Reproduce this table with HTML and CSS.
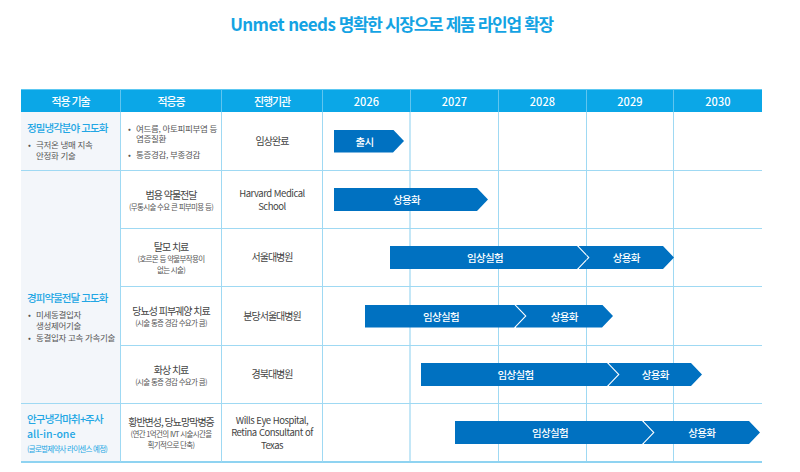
FILE: index.html
```html
<!DOCTYPE html>
<html lang="ko">
<head>
<meta charset="utf-8">
<title>Unmet needs 제품 라인업</title>
<link rel="stylesheet" href="styles.css">
</head>
<body>
<div class="page">
  <h1 class="title"><span class="en">Unmet needs</span> 명확한 시장으로 제품 라인업 확장</h1>

  <div class="table">
    <div class="th">적용 기술</div>
    <div class="th">적응증</div>
    <div class="th">진행기관</div>
    <div class="th-years">
      <div class="th yr">2026</div>
      <div class="th yr">2027</div>
      <div class="th yr">2028</div>
      <div class="th yr">2029</div>
      <div class="th yr">2030</div>
    </div>

    <!-- Row 1 -->
    <div class="tech t1">
      <div class="tech-title">정밀냉각분야 고도화</div>
      <ul class="tech-list">
        <li>극저온 냉매 지속<br>안정화 기술</li>
      </ul>
    </div>
    <div class="cell ind ind-list">
      <ul class="bul">
        <li>여드름, 아토피피부염 등<br>염증질환</li>
        <li>통증경감, 부종경감</li>
      </ul>
    </div>
    <div class="cell org">임상완료</div>
    <div class="tl">
      <div class="yc first"></div><div class="yc"></div><div class="yc"></div><div class="yc"></div><div class="yc last"></div>
      <div class="bar" style="left:11px">
        <div class="seg seg-a single" style="width:70px">출시</div>
      </div>
    </div>

    <!-- Rows 2-5 tech -->
    <div class="tech t2">
      <div class="tech-title">경피약물전달 고도화</div>
      <ul class="tech-list">
        <li>미세동결입자<br>생성제어기술</li>
        <li>동결입자 고속 가속기술</li>
      </ul>
    </div>

    <!-- Row 2 -->
    <div class="cell ind">
      <div class="ind-main">범용 약물전달</div>
      <div class="ind-sub">(무통시술 수요 큰 피부미용 등)</div>
    </div>
    <div class="cell org en-org">Harvard Medical<br>School</div>
    <div class="tl">
      <div class="yc first"></div><div class="yc"></div><div class="yc"></div><div class="yc"></div><div class="yc last"></div>
      <div class="bar" style="left:11px">
        <div class="seg seg-a single" style="width:154px">상용화</div>
      </div>
    </div>

    <!-- Row 3 -->
    <div class="cell ind">
      <div class="ind-main">탈모 치료</div>
      <div class="ind-sub">(호르몬 등 약물부작용이<br>없는 시술)</div>
    </div>
    <div class="cell org">서울대병원</div>
    <div class="tl">
      <div class="yc first"></div><div class="yc"></div><div class="yc"></div><div class="yc"></div><div class="yc last"></div>
      <div class="bar" style="left:67px">
        <div class="seg seg-a" style="width:198px">임상실험</div>
        <div class="seg seg-b" style="width:95.5px">상용화</div>
      </div>
    </div>

    <!-- Row 4 -->
    <div class="cell ind">
      <div class="ind-main">당뇨성 피부궤양 치료</div>
      <div class="ind-sub">(시술 통증 경감 수요가 큼)</div>
    </div>
    <div class="cell org">분당서울대병원</div>
    <div class="tl">
      <div class="yc first"></div><div class="yc"></div><div class="yc"></div><div class="yc"></div><div class="yc last"></div>
      <div class="bar" style="left:42px">
        <div class="seg seg-a" style="width:160px">임상실험</div>
        <div class="seg seg-b" style="width:97.5px">상용화</div>
      </div>
    </div>

    <!-- Row 5 -->
    <div class="cell ind">
      <div class="ind-main">화상 치료</div>
      <div class="ind-sub">(시술 통증 경감 수요가 큼)</div>
    </div>
    <div class="cell org">경북대병원</div>
    <div class="tl">
      <div class="yc first"></div><div class="yc"></div><div class="yc"></div><div class="yc"></div><div class="yc last"></div>
      <div class="bar" style="left:98px">
        <div class="seg seg-a" style="width:197px">임상실험</div>
        <div class="seg seg-b" style="width:93.5px">상용화</div>
      </div>
    </div>

    <!-- Row 6 -->
    <div class="tech t3 lastrow">
      <div class="tech-title tight">안구냉각마취+주사</div>
      <div class="tech-title en">all-in-one</div>
      <div class="tech-note">(글로벌제약사 라이센스 예정)</div>
    </div>
    <div class="cell ind lastrow">
      <div class="ind-main">황반변성, 당뇨망막병증</div>
      <div class="ind-sub">(연간 1억건의 IVT 시술시간을<br>획기적으로 단축)</div>
    </div>
    <div class="cell org en-org lastrow">Wills Eye Hospital,<br>Retina Consultant of<br>Texas</div>
    <div class="tl lastrow">
      <div class="yc first"></div><div class="yc"></div><div class="yc"></div><div class="yc"></div><div class="yc last"></div>
      <div class="bar" style="left:132px">
        <div class="seg seg-a" style="width:198px">임상실험</div>
        <div class="seg seg-b" style="width:116.5px">상용화</div>
      </div>
    </div>
  </div>
</div>
</body>
</html>
```

FILE: styles.css
```css
* { box-sizing: border-box; }

html, body {
  margin: 0;
  padding: 0;
  background: #ffffff;
}

body {
  font-family: "Noto Sans CJK KR", "Noto Sans", sans-serif;
  color: #444;
}

.page {
  width: 741px;
  margin-left: 21px;
}

.title {
  margin: 12px 0 53px;
  font-size: 17px;
  line-height: 24px;
  font-weight: 700;
  color: #14a3e3;
  text-align: center;
  letter-spacing: -0.078em;
}

.title .en { letter-spacing: -0.035em; }

.table {
  display: grid;
  grid-template-columns: 100px 101px 101px 439px;
  grid-template-rows: 23px 59px 58px 58px 59px 58px 59px;
}

/* header */
.th {
  background: #0ba7e7;
  color: #fff;
  font-size: 11px;
  font-weight: 500;
  letter-spacing: -0.1em;
  display: flex;
  align-items: center;
  justify-content: center;
  border-right: 1px solid rgba(255, 255, 255, 0.35);
  border-top: 1px solid #5cc8f2;
}

.th-years {
  display: grid;
  grid-template-columns: 88px 88px 88px 87px 88px;
}

.th.yr { letter-spacing: 0.01em; }
.th-years .th:last-child { border-right: none; }

/* body cells */
.cell {
  border-right: 1px solid #9fd9f3;
  border-bottom: 1px solid #9fd9f3;
  display: flex;
  flex-direction: column;
  align-items: center;
  justify-content: center;
  text-align: center;
}

.tech {
  grid-column: 1;
  background: #f3f6fa;
  border-right: 1px solid #9fd9f3;
  border-bottom: 1px solid #9fd9f3;
  padding: 0 2px 0 6px;
  display: flex;
  flex-direction: column;
  justify-content: center;
}

.t1 { grid-row: 2; }
.t2 { grid-row: 3 / span 4; padding-top: 60px; }
.t3 { grid-row: 7; }

.tech-title {
  font-size: 10.5px;
  line-height: 13.5px;
  font-weight: 500;
  color: #22a6e4;
  letter-spacing: -0.09em;
}

.tech-title.tight { line-height: 15.4px; letter-spacing: -0.08em; }
.tech-title.en { letter-spacing: 0; font-size: 10.5px; line-height: 15.4px; }

.tech-note {
  margin-top: 2px;
  font-size: 7.5px;
  line-height: 11px;
  color: #22a6e4;
  letter-spacing: -0.1em;
}

.tech-list,
.bul {
  list-style: none;
  margin: 0;
  padding: 0;
}

.tech-list { margin-top: 5px; }

.tech-list li,
.bul li {
  position: relative;
  padding-left: 9px;
  font-size: 8.5px;
  line-height: 11px;
  color: #555;
  letter-spacing: -0.04em;
  text-align: left;
  white-space: nowrap;
}

.tech-list li + li { margin-top: 1px; }

.tech-list li::before,
.bul li::before {
  content: "•";
  position: absolute;
  left: 1px;
  top: 0;
  color: #555;
}

.ind-list {
  align-items: flex-start;
  padding-left: 6px;
}

.bul li { line-height: 10.5px; }
.bul li + li { margin-top: 5px; }

.ind-main {
  font-size: 10px;
  line-height: 13px;
  color: #444;
  letter-spacing: -0.1em;
  white-space: nowrap;
}

.ind-sub {
  font-size: 7.5px;
  line-height: 11px;
  color: #555;
  letter-spacing: -0.09em;
  white-space: nowrap;
}

.org {
  font-size: 10px;
  line-height: 12.5px;
  color: #444;
  letter-spacing: -0.1em;
}

.org.en-org { letter-spacing: -0.05em; font-size: 9.5px; line-height: 12.5px; }

/* timeline */
.tl {
  position: relative;
  display: grid;
  grid-template-columns: 88px 88px 88px 87px 88px;
  border-bottom: 1px solid #9fd9f3;
}

.yc { border-right: 1px solid #9fd9f3; }
.yc.first { border-right: 2px solid #c4e7f7; }
.yc.last { border-right: none; }

.lastrow { border-bottom-width: 2px; border-bottom-color: #8fd3f1; }

.bar {
  position: absolute;
  top: 50%;
  height: 23px;
  margin-top: -11.5px;
  display: flex;
}

.seg {
  height: 23px;
  background: #0071c1;
  color: #fff;
  font-size: 10.5px;
  font-weight: 500;
  letter-spacing: -0.06em;
  display: flex;
  align-items: center;
  justify-content: center;
  white-space: nowrap;
}

.seg-a {
  padding-right: 8px;
  clip-path: polygon(0 0, calc(100% - 11px) 0, 100% 50%, calc(100% - 11px) 100%, 0 100%);
}

.seg-a.single { padding-right: 9px; }

.seg-b {
  margin-left: -9.5px;
  clip-path: polygon(0 0, calc(100% - 11px) 0, 100% 50%, calc(100% - 11px) 100%, 0 100%, 11px 50%);
}
```
